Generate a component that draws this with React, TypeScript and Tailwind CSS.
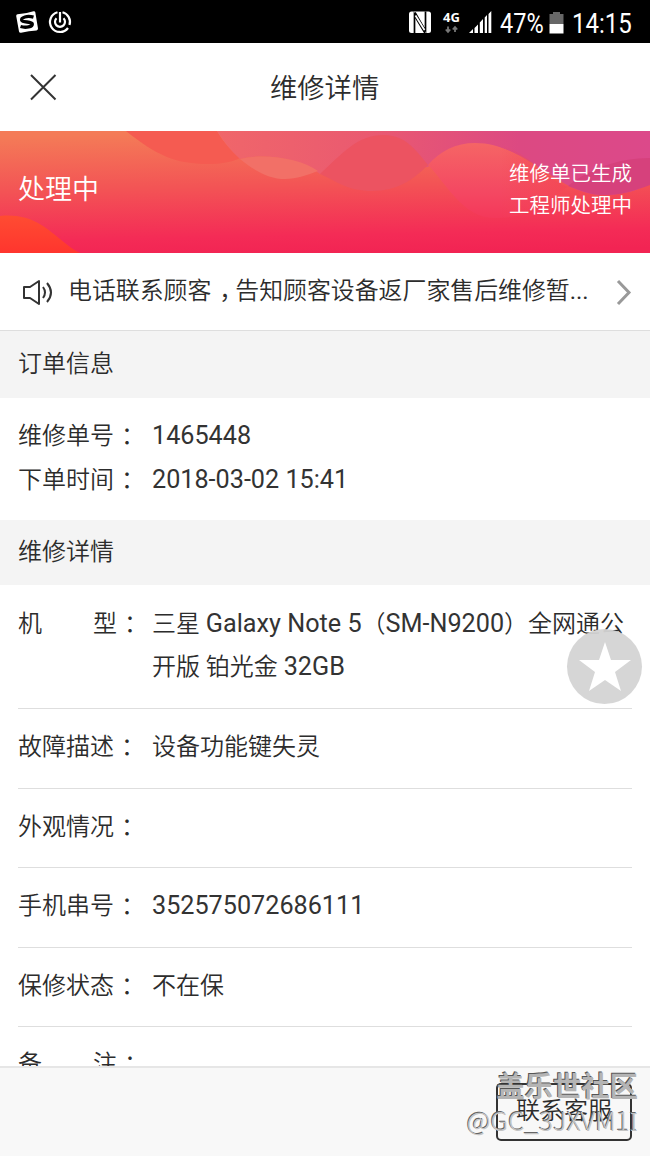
import type { ReactNode } from 'react';

function StatusBar() {
  return (
    <header className="flex h-[43px] shrink-0 items-center bg-black font-normal text-white">
      <svg width="60" height="43" viewBox="0 0 60 43" className="ml-[14px]">
        <path d="M3.500 14.300Q12 13.800 19.500 11.300Q21 11 21.300 12.300L24 28.500Q24 30 22.500 30.500Q15 30.800 7 32.800Q5.300 33 5 31.500L2.200 16Q2.200 14.500 3.500 14.300Z" fill="#fff" />
        <path d="M19.500 17.200C13 15.300 7 17.500 7.700 20.200C8.500 23 17.800 21 18.300 24C18.500 26.700 12 28.200 6.500 26.500" fill="none" stroke="#000" strokeWidth="3.300" />
        <path d="M43.500 12.300A10 10 0 1 0 54 28M48.500 12.300A10 10 0 0 1 55.500 25" fill="none" stroke="#fff" strokeWidth="2.200" />
        <path d="M42.500 18.300A5 5 0 1 0 49.500 18.300" fill="none" stroke="#fff" strokeWidth="2.200" />
        <path d="M46 12V22.500" stroke="#fff" strokeWidth="2.200" />
      </svg>
      <svg width="90" height="43" viewBox="0 0 90 43" className="ml-[331px]">
        <rect x="4" y="11.500" width="22" height="21.500" rx="2.500" fill="#fff" />
        <path d="M9.500 33V14L20.500 30.500V11.500" fill="none" stroke="#000" strokeWidth="1.700" />
        <path d="M10 12.500L20 30M10 16.500L20 33" stroke="#000" strokeWidth="1.700" />
        <path d="M10.500 15.500L19.500 30" stroke="#fff" strokeWidth="1.800" />
        <text x="38" y="22" fill="#fff" fontFamily="Open Sans" fontWeight="700" fontSize="13">4G</text>
        <path d="M43 26.500V31M40.800 29.500L43 32L45.200 29.500M50 32V27.500M47.800 29.500L50 27L52.200 29.500" fill="none" stroke="#777" strokeWidth="1.800" />
        <path d="M64 33L68 29V33ZM69.500 28L73 24.500V33H69.500ZM74.800 22.500L78 19V33H74.800ZM79.700 17.500L82 15V33H79.700ZM83.500 14L86.300 11V33H83.500Z" fill="#fff" />
      </svg>
      <span className="ml-[5px] w-[45px] origin-left scale-x-[0.87] whitespace-nowrap pt-[4px] font-[Roboto] text-[27px] leading-[40px]">47%</span>
      <svg width="15" height="43" viewBox="0 0 15 43" className="ml-[4px]">
        <path d="M0.500 14H4V12H11V14H14.500V24H0.500Z" fill="#676767" />
        <rect x="0.500" y="24" width="14" height="9.500" fill="#fff" />
      </svg>
      <span className="ml-[8px] w-[62px] origin-left scale-x-[0.89] whitespace-nowrap pt-[4px] font-[Roboto] text-[27px] leading-[40px]">14:15</span>
    </header>
  );
}

function BannerArt() {
  return (
    <svg width="650" height="122" viewBox="0 0 650 122" className="col-start-1 row-start-1">
      <defs>
        <linearGradient id="base" x1="0.450" y1="0" x2="0.550" y2="1">
          <stop offset="0" stopColor="#f47b57" />
          <stop offset="0.450" stopColor="#f35355" />
          <stop offset="0.850" stopColor="#f42b56" />
          <stop offset="1" stopColor="#f22453" />
        </linearGradient>
        <linearGradient id="violet" x1="215" y1="0" x2="650" y2="0" gradientUnits="userSpaceOnUse">
          <stop offset="0" stopColor="#f0666a" />
          <stop offset="0.350" stopColor="#ea5a70" />
          <stop offset="0.700" stopColor="#dc4982" />
          <stop offset="1" stopColor="#dc498a" />
        </linearGradient>
        <linearGradient id="hump" x1="0" y1="0" x2="0" y2="1">
          <stop offset="0" stopColor="#f56565" />
          <stop offset="0.650" stopColor="#f44862" />
          <stop offset="1" stopColor="#f4385a" />
        </linearGradient>
        <linearGradient id="humpFade" x1="500" y1="0" x2="570" y2="0" gradientUnits="userSpaceOnUse">
          <stop offset="0" stopColor="#f3474f" stopOpacity="0" />
          <stop offset="1" stopColor="#f3474f" stopOpacity="0.700" />
        </linearGradient>
        <linearGradient id="corner" x1="0" y1="0" x2="0" y2="1">
          <stop offset="0" stopColor="#ff4c32" />
          <stop offset="1" stopColor="#ff352e" />
        </linearGradient>
      </defs>
      <rect width="650" height="122" fill="url(#base)" />
      <path d="M126 0C157 25 177 33 208 33C220 33 232 31 240 27C228 17 222 8 217 0Z" fill="#f55b51" />
      <path d="M217 0C224 11 231 20 240 28C264 22 300 27 320 43L428 36C440 20 456 13 475 13C530 13 556 64 604 64C625 64 640 58 650 53V0Z" fill="url(#violet)" />
      <path d="M240 28C253 39 269 48 285 48C297 48 307 44 318 40C300 27 264 22 240 28Z" fill="#f27067" />
      <path d="M320 43C343 22 357 4 384 4C405 4 415 18 428 34C414 48 398 60 372 60C348 60 338 51 320 43Z" fill="#ec5361" />
      <path d="M428 34C440 20 456 12 475 12C518 12 541 47 568 56C556 62 535 87 494 87C463 87 446 52 428 34Z" fill="url(#hump)" />
      <path d="M500 14C530 22 545 47 568 56C556 62 535 87 500 87Z" fill="url(#humpFade)" />
      <path d="M568 55C589 38 618 27 650 27V54C633 60 622 64 604 64C590 64 579 59 568 55Z" fill="#d6417c" />
      <path d="M0 85C29 82 44 95 60 108C67 114 74 119 80 122H0Z" fill="url(#corner)" />
    </svg>
  );
}

function SectionTitle({ children, className }: { children: ReactNode; className: string }) {
  return <h2 className={`flex shrink-0 items-center bg-[#f4f4f4] px-[18px] pb-[2px] text-[24px] ${className}`}>{children}</h2>;
}

function Latin({ children }: { children: ReactNode }) {
  return <span className="font-[Roboto] text-[25.2px] font-normal leading-none text-[#333]">{children}</span>;
}

function Label({ text, spread }: { text: string; spread?: boolean }) {
  return (
    <span className="flex w-[134px] shrink-0">
      {spread ? (
        <span className="flex w-[99px] justify-between"><span>{text[0]}</span><span>{text[1]}</span></span>
      ) : (
        <span className="w-[96px]">{text}</span>
      )}
      <span className="ml-[7px]">：</span>
    </span>
  );
}

function DetailRow({ label, children }: { label: string; children?: ReactNode }) {
  return (
    <div className="mx-[18px] flex h-[79.500px] shrink-0 items-center border-b border-[#dedede] pb-[2px]">
      <Label text={label} />
      <span>{children}</span>
    </div>
  );
}

export default function App() {
  return (
    <div className="relative flex h-[1156px] w-[650px] flex-col overflow-hidden bg-white font-[Roboto,'Noto_Sans_CJK_SC',sans-serif] text-[24px] font-[350] text-[#2c2c2c]">
      <StatusBar />
      <nav className="flex h-[88px] shrink-0 items-center">
        <svg width="27" height="27" viewBox="0 0 27 27" className="ml-[30px]" fill="none" stroke="#333" strokeWidth="2">
          <path d="M1 1L25.500 25.500M25.500 1L1 25.500" />
        </svg>
        <h1 className="ml-[213px] pt-[5px] text-[27.300px]">维修详情</h1>
      </nav>
      <section className="grid h-[122px] shrink-0 text-white">
        <BannerArt />
        <div className="col-start-1 row-start-1 flex items-center justify-between px-[18px]">
          <p className="pb-[4px] text-[27px]">处理中</p>
          <p className="pb-[5px] text-right text-[20.500px] leading-[32px]">维修单已生成<br />工程师处理中</p>
        </div>
      </section>
      <section className="flex h-[78px] shrink-0 items-center border-b border-[#dedede] pl-[22px]">
        <svg width="33" height="28" viewBox="0 0 33 28" fill="none" stroke="#333" strokeWidth="2" strokeLinejoin="round">
          <path d="M2 9H8L17 3V26L8 20H2Z" />
          <path d="M21 9Q25 14.500 21 20M25 5Q33 14.500 25 24" />
        </svg>
        <p className="ml-[13px] w-[535px] whitespace-nowrap text-[23.900px]">电话联系顾客<span className="inline-block w-[23.900px] pl-[8px]">，</span>告知顾客设备返厂家售后维修暂<span className="font-normal">...</span></p>
        <svg width="20" height="28" viewBox="0 0 20 28" className="ml-[12px]" fill="none" stroke="#999" strokeWidth="3">
          <path d="M3 3L14 14.500L3 26" />
        </svg>
      </section>
      <SectionTitle className="h-[67px]">订单信息</SectionTitle>
      <section className="flex h-[122px] shrink-0 flex-col px-[18px] pt-[17px] leading-[43.500px]">
        <div className="flex"><Label text="维修单号" /><span><Latin>1465448</Latin></span></div>
        <div className="flex"><Label text="下单时间" /><span><Latin>2018-03-02 15:41</Latin></span></div>
      </section>
      <SectionTitle className="h-[65px]">维修详情</SectionTitle>
      <div className="mx-[18px] flex h-[124px] shrink-0 border-b border-[#dedede] pt-[17.500px] leading-[43.500px]">
        <Label text="机型" spread />
        <span className="whitespace-nowrap">三星 <Latin>Galaxy Note 5</Latin>（<Latin>SM-N9200</Latin>）全网通公<br />开版 铂光金 <Latin>32GB</Latin></span>
      </div>
      <DetailRow label="故障描述">设备功能键失灵</DetailRow>
      <DetailRow label="外观情况" />
      <DetailRow label="手机串号"><Latin>352575072686111</Latin></DetailRow>
      <DetailRow label="保修状态">不在保</DetailRow>
      <div className="mx-[18px] flex h-[39px] shrink-0 overflow-hidden pt-[16px] leading-[43.500px]"><Label text="备注" spread /></div>
      <footer className="flex min-h-0 flex-1 justify-end border-t-2 border-[#e6e6e6] bg-[#f8f8f8] pr-[18px] pt-[15px]">
        <button className="flex h-[58px] w-[136px] items-center justify-center rounded-[5px] border-2 border-[#333] pb-[3px] text-[24px]">联系客服</button>
      </footer>
      <div className="absolute left-[567px] top-[629px] flex size-[75px] items-center justify-center rounded-full bg-[#d4d4d4]/95">
        <svg width="52" height="50" viewBox="0 0 52 50"><path d="M26 0L32 18H52L36 30L42 49L26 38L10 49L16 30L0 18H20Z" fill="#fff" /></svg>
      </div>
      <div className="absolute bottom-[17px] right-[12px] flex flex-col items-end whitespace-nowrap font-['Noto_Sans_CJK_SC',sans-serif]">
        <span className="text-[28.300px] font-bold leading-[34px] text-[#b4b4b4] [text-shadow:-1px_-1px_0_#555]">盖乐世社区</span>
        <span className="text-[26.200px] font-light leading-[36px] text-[#c4c4c4] [text-shadow:-1px_-1px_0_#666]">@GC_3JXVM1<span className="font-['Noto_Sans']">I</span></span>
      </div>
    </div>
  );
}
